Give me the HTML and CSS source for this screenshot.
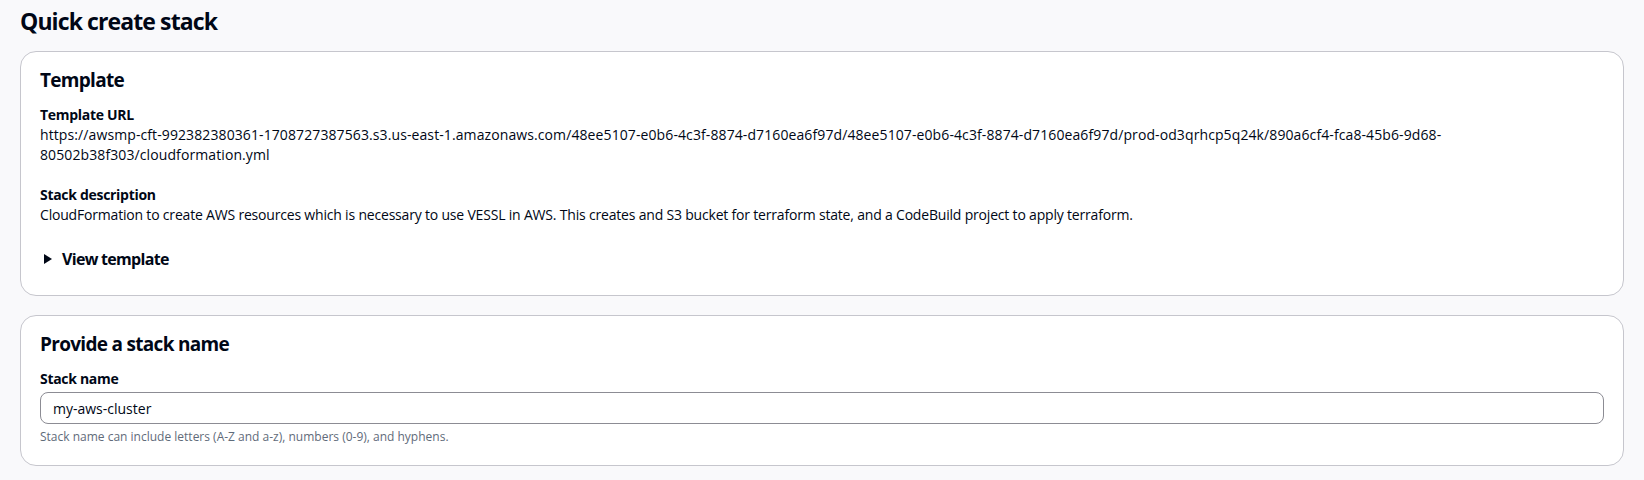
FILE: index.html
```html
<!DOCTYPE html>
<html lang="en">
<head>
<meta charset="utf-8">
<title>Quick create stack</title>
<link rel="stylesheet" href="styles.css">
</head>
<body>
<main class="page">
  <h1 class="page-title">Quick create stack</h1>

  <section class="card">
    <h2 class="card-title">Template</h2>
    <div class="field">
      <div class="field-label">Template URL</div>
      <div class="field-value field-url">https://awsmp-cft-992382380361-1708727387563.s3.us-east-1.amazonaws.com/48ee5107-e0b6-4c3f-8874-d7160ea6f97d/48ee5107-e0b6-4c3f-8874-d7160ea6f97d/prod-od3qrhcp5q24k/890a6cf4-fca8-45b6-9d68-80502b38f303/cloudformation.yml</div>
    </div>
    <div class="field">
      <div class="field-label">Stack description</div>
      <div class="field-value field-desc">CloudFormation to create AWS resources which is necessary to use VESSL in AWS. This creates and S3 bucket for terraform state, and a CodeBuild project to apply terraform.</div>
    </div>
    <div class="expander">
      <svg class="caret" width="8" height="10" viewBox="0 0 8 10" aria-hidden="true"><path d="M0 0 L8 5 L0 10 Z" fill="#000716"/></svg>
      <span class="expander-label">View template</span>
    </div>
  </section>

  <section class="card card-name">
    <h2 class="card-title">Provide a stack name</h2>
    <label class="field-label" for="stackname">Stack name</label>
    <input class="text-input" id="stackname" type="text" value="my-aws-cluster">
    <div class="hint">Stack name can include letters (A-Z and a-z), numbers (0-9), and hyphens.</div>
  </section>
</main>
</body>
</html>
```

FILE: styles.css
```css
* { box-sizing: border-box; }

html, body {
  margin: 0;
  padding: 0;
  background: #f9f9fb;
}

body {
  font-family: "Open Sans", "Noto Sans", sans-serif;
  color: #000716;
  font-size: 14px;
  line-height: 20px;
}

.page {
  padding: 6px 20px 0 20px;
  display: flex;
  flex-direction: column;
}

.page-title {
  margin: 0 0 15px 0;
  font-size: 23px;
  line-height: 30px;
  font-weight: 700;
  letter-spacing: -0.9px;
}

.card {
  background: #ffffff;
  border: 1px solid #c6c6cd;
  border-radius: 16px;
  padding: 16px 19px 26px 19px;
  display: flex;
  flex-direction: column;
}

.card + .card { margin-top: 19px; }

.card-name { padding-bottom: 20px; }

.card-title {
  margin: 0 0 13px 0;
  font-size: 19px;
  line-height: 24px;
  font-weight: 700;
  letter-spacing: -0.7px;
}

.field + .field { margin-top: 20px; }

.field-label {
  display: block;
  font-weight: 700;
  font-size: 14px;
  line-height: 20px;
  letter-spacing: -0.3px;
}

.field-value {
  font-size: 14px;
  line-height: 20px;
}

.field-url { letter-spacing: 0.1px; }

.field-desc { letter-spacing: -0.19px; }

.expander {
  margin-top: 24px;
  display: flex;
  align-items: center;
  gap: 10px;
  padding-left: 4px;
}

.caret { flex: none; }

.expander-label {
  font-size: 16px;
  line-height: 20px;
  font-weight: 700;
  letter-spacing: -0.7px;
}

.text-input {
  margin-top: 3px;
  width: 100%;
  height: 32px;
  border: 1px solid #8c8c94;
  border-radius: 8px;
  padding: 0 12px;
  font-family: inherit;
  font-size: 14px;
  color: #000716;
  background: #ffffff;
}

.hint {
  margin-top: 5px;
  font-size: 12px;
  line-height: 16px;
  color: #5f6b7a;
}
```
